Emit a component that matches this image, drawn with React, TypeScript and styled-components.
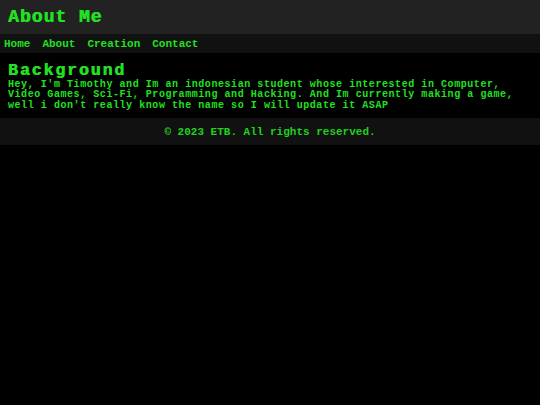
import styled, { createGlobalStyle } from 'styled-components';

const GlobalStyle = createGlobalStyle`
  html, body {
    margin: 0;
    padding: 0;
    background: #000;
  }
  body {
    font-family: "Liberation Mono", "DejaVu Sans Mono", monospace;
    color: #22e022;
  }
`;

const Header = styled.header`
  height: 34px;
  display: flex;
  align-items: center;
  padding: 0 8px;
  background-color: #222;
`;

const Title = styled.h1`
  margin: 0;
  font-size: 18px;
  font-weight: bold;
  letter-spacing: 1px;
  text-shadow: 0.6px 0 currentColor;
`;

const Nav = styled.nav`
  height: 19px;
  display: flex;
  align-items: center;
  gap: 12px;
  padding: 0 4px;
  background-color: #111;
`;

const NavLink = styled.a`
  color: #22e022;
  text-decoration: none;
  font-size: 11px;
  font-weight: bold;
`;

const Section = styled.section`
  padding: 8px 8px 7px;
`;

const Heading = styled.h2`
  margin: 0;
  font-size: 16.5px;
  font-weight: bold;
  letter-spacing: 1.9px;
  line-height: 19px;
  text-shadow: 0.6px 0 currentColor;
`;

const Paragraph = styled.p`
  margin: 0;
  font-size: 10px;
  font-weight: bold;
  letter-spacing: 0.56px;
  line-height: 10.4px;
`;

const Footer = styled.footer`
  height: 27px;
  display: flex;
  align-items: center;
  justify-content: center;
  background-color: #111;
  font-size: 11px;
  font-weight: bold;
  color: #1fd01f;
`;

export default function App() {
  return (
    <>
      <GlobalStyle />
      <Header>
        <Title>About Me</Title>
      </Header>
      <Nav>
        <NavLink href="#">Home</NavLink>
        <NavLink href="#">About</NavLink>
        <NavLink href="#">Creation</NavLink>
        <NavLink href="#">Contact</NavLink>
      </Nav>
      <Section>
        <Heading>Background</Heading>
        <Paragraph>
          Hey, I'm Timothy and Im an indonesian student whose interested in Computer,
          Video Games, Sci-Fi, Programming and Hacking. And Im currently making a game,
          well i don't really know the name so I will update it ASAP
        </Paragraph>
      </Section>
      <Footer>© 2023 ETB. All rights reserved.</Footer>
    </>
  );
}
